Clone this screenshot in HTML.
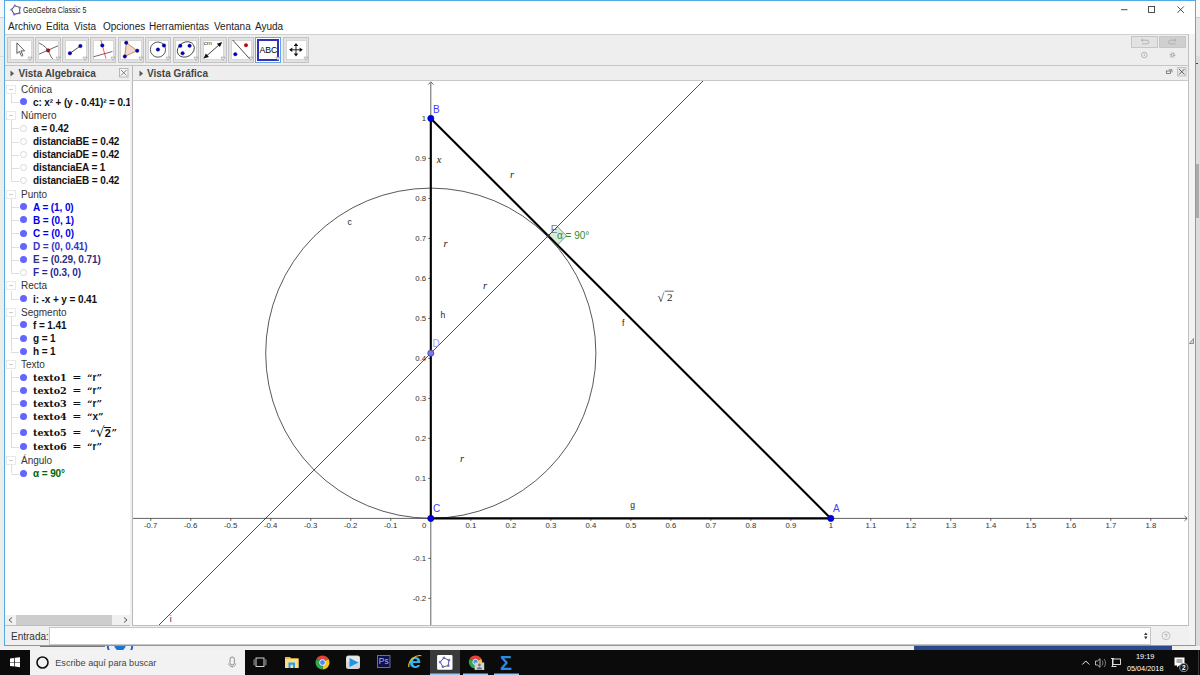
<!DOCTYPE html><html><head><meta charset="utf-8"><title>GeoGebra Classic 5</title><style>
*{box-sizing:border-box;margin:0;padding:0}
html,body{width:1200px;height:675px;overflow:hidden;background:#f0f0f0;font-family:"Liberation Sans",sans-serif;}
.abs{position:absolute}
#win{position:absolute;left:4px;top:0;width:1192px;height:646px;background:#fff;border:1px solid #55aae3;overflow:hidden}
#wi{position:absolute;left:0;top:1px;width:1190px;height:643px;background:#f0f0f0}
#title{position:absolute;left:0;top:0;width:1190px;height:18px;background:#fff}
#title .t{position:absolute;left:18px;top:4px;font-size:8.2px;color:#222;white-space:nowrap;transform:scaleX(0.86);transform-origin:0 0}
#menu{position:absolute;left:0;top:18px;width:1190px;height:14px;background:#fff;font-size:10px;color:#222;white-space:nowrap}
#menu span{position:absolute;top:1px}
#tb{position:absolute;left:0;top:32px;width:1184px;height:32px;background:#eeeeee;border-top:1px solid #d0d0d0;border-bottom:1px solid #c4c4c4}
.btn{position:absolute;top:3px;width:26px;height:26px;border:1px solid #cfcfcf;background:#e3e3e3}
.btn i{position:absolute;left:2px;top:2px;width:20px;height:20px;background:#fff;border:1px solid #dcdcdc}
.btn.sel{border:1px solid #8fb6e6;background:#fff}
.btn.sel i{left:0px;top:0px;width:24px;height:24px;border:2px solid #3a3ab8}
.btn svg{position:absolute;left:0;top:0}
.hdr{position:absolute;top:64px;height:15px;background:#eeeeee;border-bottom:1px solid #c8c8c8;font-weight:bold;font-size:10px;color:#444;white-space:nowrap}
.hdr .tx{position:absolute;top:2px}
#alg{position:absolute;left:0px;top:79px;width:125px;height:545px;background:#fff;overflow:hidden;border-bottom:1px solid #bdbdbd}
.row{position:absolute;left:0;white-space:nowrap;font-size:10px;line-height:13px;height:13px}
.cat{color:#333;left:16px}
.it{font-weight:bold;left:28px;color:#111;letter-spacing:-0.1px}
.tex{letter-spacing:0;font-family:"DejaVu Serif","Liberation Serif",serif;font-weight:bold;font-size:9.6px}
.dot{position:absolute;left:15px;width:7px;height:7px;border-radius:50%;background:#6464ff}
.dot.off{background:#fff;border:1px solid #d8d8d8}
.pm{position:absolute;left:1.400px;width:9.400px;height:9px;border:1px solid #e9e9e9;background:#fff}
.pm:after{content:"";position:absolute;left:1.500px;top:3px;width:4.600px;height:1px;background:#cccccc}
#gv{position:absolute;left:127px;top:79px;width:1057px;height:545px;background:#fff;border-left:1px solid #b8b8b8;border-right:1px solid #c0c0c0;border-bottom:1px solid #bdbdbd;overflow:hidden}
#inp{position:absolute;left:0;top:624px;width:1184px;height:20px;background:#f0f0f0}
#task{position:absolute;left:0;top:650px;width:1200px;height:25px;background:#0b0b0b}
</style></head><body>
<div class="abs" style="left:0;top:0;width:4px;height:17px;background:#f7f7f7"></div>
<div class="abs" style="left:0;top:17px;width:4px;height:629px;background:#ededed"></div>
<div class="abs" style="left:0;top:16.5px;width:4px;height:1px;background:#cfcfcf"></div>
<div class="abs" style="left:0;top:56px;width:4px;height:1px;background:#dadada"></div>
<div class="abs" style="left:1196px;top:0;width:4px;height:17px;background:#fafafa"></div>
<div class="abs" style="left:1196px;top:17px;width:4px;height:39px;background:#e6e6e6"></div>
<div class="abs" style="left:1196px;top:56px;width:4px;height:590px;background:#dcdcdc"></div>
<div class="abs" style="left:1196px;top:16.5px;width:4px;height:1px;background:#cfcfcf"></div>
<div class="abs" style="left:1196px;top:164px;width:3px;height:54px;background:#ababab"></div>
<div class="abs" style="left:1196px;top:62.5px;width:2px;height:1.5px;background:#444"></div>
<div class="abs" style="left:0;top:646px;width:1200px;height:4px;background:#f0f0f0"></div>
<div class="abs" style="left:40px;top:645.8px;width:64.5px;height:1.600px;background:#787878"></div>
<svg class="abs" style="left:103.5px;top:644px" width="32" height="6" viewBox="0 0 32 6"><circle cx="16" cy="1" r="12.300" fill="none" stroke="#1565c0" stroke-width="1.900"/><circle cx="16" cy="1" r="5.800" fill="#1976d2"/></svg>
<div class="abs" style="left:914px;top:646px;width:258px;height:4px;background:#2b4a8c"></div>
<div id="win"><div id="wi">
<div id="title">
<svg class="abs" style="left:5px;top:2px" width="12" height="12" viewBox="0 0 12 12"><polygon points="6,1.5 10.3,4.6 8.7,9.8 3.3,9.8 1.7,4.6" fill="none" stroke="#555" stroke-width="1" transform="rotate(-14 6 6)"/><g fill="#7878e0" transform="rotate(-14 6 6)"><circle cx="6" cy="1.5" r="1.2"/><circle cx="10.3" cy="4.6" r="1.2"/><circle cx="8.7" cy="9.8" r="1.2"/><circle cx="3.3" cy="9.8" r="1.2"/><circle cx="1.7" cy="4.6" r="1.2"/></g></svg>
<div class="t">GeoGebra Classic 5</div>
<svg class="abs" style="left:1110px;top:0" width="80" height="18" viewBox="0 0 80 18"><g stroke="#222" stroke-width="0.8" fill="none"><path d="M6 7.700h6.500"/><rect x="33.600" y="4.400" width="6" height="6"/><path d="M62.400 4.400l6.500 6.500M68.900 4.400l-6.500 6.500"/></g></svg>
</div>
<div id="menu">
<span style="left:3.0px">Archivo</span>
<span style="left:41.0px">Edita</span>
<span style="left:69.0px">Vista</span>
<span style="left:98.0px">Opciones</span>
<span style="left:144.0px">Herramientas</span>
<span style="left:209.0px">Ventana</span>
<span style="left:250.0px">Ayuda</span>
</div>
<div id="tb">
<div class="abs" style="left:2.30px;top:2.3px;width:26.4px;height:25.3px;background:#e2e2e2;border:1px solid #c4c4c4"></div>
<div class="abs" style="left:5.10px;top:5.100px;width:21.500px;height:19.800px;background:#fff;border:1px solid #d6d6d6"></div>
<svg class="abs" style="left:2.30px;top:2.3px" width="26.4" height="25.3" viewBox="0 0 26.4 25.3"><path d="M9.9 5.9v10.6l2.5-2.1 1.9 4.3c.4.8 1.9.2 1.5-.7l-1.9-4.1h3.7z" fill="#fff" stroke="#333" stroke-width="0.8" stroke-linejoin="miter"/><path d="M21 20.2h4l-2 3.2z" fill="#fafafa" stroke="#8c8c8c" stroke-width="0.6"/></svg>
<div class="abs" style="left:29.85px;top:2.3px;width:26.4px;height:25.3px;background:#e2e2e2;border:1px solid #c4c4c4"></div>
<div class="abs" style="left:32.65px;top:5.100px;width:21.500px;height:19.800px;background:#fff;border:1px solid #d6d6d6"></div>
<svg class="abs" style="left:29.85px;top:2.3px" width="26.4" height="25.3" viewBox="0 0 26.4 25.3"><path d="M4 5.9c5 2.4 9 6 10.5 10.500c1 2.500 2 4.500 3.400 5.600M4 17.200l19-8.400" fill="none" stroke="#333" stroke-width="0.750"/><circle cx="13.1" cy="13.4" r="1.700" fill="#d40000" stroke="#500" stroke-width="0.500"/><path d="M21 20.2h4l-2 3.2z" fill="#fafafa" stroke="#8c8c8c" stroke-width="0.6"/></svg>
<div class="abs" style="left:57.40px;top:2.3px;width:26.4px;height:25.3px;background:#e2e2e2;border:1px solid #c4c4c4"></div>
<div class="abs" style="left:60.20px;top:5.100px;width:21.500px;height:19.800px;background:#fff;border:1px solid #d6d6d6"></div>
<svg class="abs" style="left:57.40px;top:2.3px" width="26.4" height="25.3" viewBox="0 0 26.4 25.3"><path d="M7.9 16.3L18.4 9" stroke="#222" stroke-width="0.8"/><circle cx="7.9" cy="16.3" r="1.75" fill="#0000c8" stroke="#00004a" stroke-width="0.4"/><circle cx="18.4" cy="9" r="1.75" fill="#0000c8" stroke="#00004a" stroke-width="0.4"/><path d="M21 20.2h4l-2 3.2z" fill="#fafafa" stroke="#8c8c8c" stroke-width="0.6"/></svg>
<div class="abs" style="left:84.95px;top:2.3px;width:26.4px;height:25.3px;background:#e2e2e2;border:1px solid #c4c4c4"></div>
<div class="abs" style="left:87.75px;top:5.100px;width:21.500px;height:19.800px;background:#fff;border:1px solid #d6d6d6"></div>
<svg class="abs" style="left:84.95px;top:2.3px" width="26.4" height="25.3" viewBox="0 0 26.4 25.3"><path d="M10.85 3.15L16 21.6" stroke="#ff3030" stroke-width="0.8"/><path d="M3.5 19.8l18.900-5.300" stroke="#5a3c3c" stroke-width="0.8"/><circle cx="12.3" cy="8.4" r="1.75" fill="#0000c8" stroke="#00004a" stroke-width="0.4"/><path d="M21 20.2h4l-2 3.2z" fill="#fafafa" stroke="#8c8c8c" stroke-width="0.6"/></svg>
<div class="abs" style="left:112.50px;top:2.3px;width:26.4px;height:25.3px;background:#e2e2e2;border:1px solid #c4c4c4"></div>
<div class="abs" style="left:115.30px;top:5.100px;width:21.500px;height:19.800px;background:#fff;border:1px solid #d6d6d6"></div>
<svg class="abs" style="left:112.50px;top:2.3px" width="26.4" height="25.3" viewBox="0 0 26.4 25.3"><polygon points="8.26,5.7 19.25,13.7 6.8,19.4" fill="#f2d6c8" stroke="#b87850" stroke-width="0.8"/><circle cx="8.26" cy="5.7" r="1.75" fill="#0000c8" stroke="#00004a" stroke-width="0.4"/><circle cx="19.25" cy="13.7" r="1.75" fill="#0000c8" stroke="#00004a" stroke-width="0.4"/><circle cx="6.8" cy="19.4" r="1.75" fill="#0000c8" stroke="#00004a" stroke-width="0.4"/><path d="M21 20.2h4l-2 3.2z" fill="#fafafa" stroke="#8c8c8c" stroke-width="0.6"/></svg>
<div class="abs" style="left:140.05px;top:2.3px;width:26.4px;height:25.3px;background:#e2e2e2;border:1px solid #c4c4c4"></div>
<div class="abs" style="left:142.85px;top:5.100px;width:21.500px;height:19.800px;background:#fff;border:1px solid #d6d6d6"></div>
<svg class="abs" style="left:140.05px;top:2.3px" width="26.4" height="25.3" viewBox="0 0 26.4 25.3"><circle cx="12.95" cy="12.6" r="7.6" fill="none" stroke="#222" stroke-width="0.75"/><circle cx="12.95" cy="12.6" r="1.75" fill="#0000c8" stroke="#00004a" stroke-width="0.4"/><circle cx="18.95" cy="8.4" r="1.75" fill="#0000c8" stroke="#00004a" stroke-width="0.4"/><path d="M21 20.2h4l-2 3.2z" fill="#fafafa" stroke="#8c8c8c" stroke-width="0.6"/></svg>
<div class="abs" style="left:167.60px;top:2.3px;width:26.4px;height:25.3px;background:#e2e2e2;border:1px solid #c4c4c4"></div>
<div class="abs" style="left:170.40px;top:5.100px;width:21.500px;height:19.800px;background:#fff;border:1px solid #d6d6d6"></div>
<svg class="abs" style="left:167.60px;top:2.3px" width="26.4" height="25.3" viewBox="0 0 26.4 25.3"><ellipse cx="12.8" cy="12.45" rx="9" ry="7.2" fill="none" stroke="#222" stroke-width="0.75" transform="rotate(-32 12.8 12.45)"/><circle cx="7.3" cy="8.8" r="1.75" fill="#0000c8" stroke="#00004a" stroke-width="0.4"/><circle cx="16.6" cy="8.8" r="1.75" fill="#0000c8" stroke="#00004a" stroke-width="0.4"/><circle cx="9.6" cy="16.35" r="1.75" fill="#0000c8" stroke="#00004a" stroke-width="0.4"/><path d="M21 20.2h4l-2 3.2z" fill="#fafafa" stroke="#8c8c8c" stroke-width="0.6"/></svg>
<div class="abs" style="left:195.15px;top:2.3px;width:26.4px;height:25.3px;background:#e2e2e2;border:1px solid #c4c4c4"></div>
<div class="abs" style="left:197.95px;top:5.100px;width:21.500px;height:19.800px;background:#fff;border:1px solid #d6d6d6"></div>
<svg class="abs" style="left:195.15px;top:2.3px" width="26.4" height="25.3" viewBox="0 0 26.4 25.3"><path d="M5 20.3L20.800 6.400" stroke="#111" stroke-width="0.800"/><path d="M3.550 21.600l2.300-5 3.100 3.400zM22.250 5.100l-2.300 5-3.100-3.400z" fill="#111"/><text x="3.700" y="8.500" font-size="6.200" fill="#333" font-family="Liberation Sans, sans-serif">cm</text><path d="M21 20.2h4l-2 3.2z" fill="#fafafa" stroke="#8c8c8c" stroke-width="0.6"/></svg>
<div class="abs" style="left:222.70px;top:2.3px;width:26.4px;height:25.3px;background:#e2e2e2;border:1px solid #c4c4c4"></div>
<div class="abs" style="left:225.50px;top:5.100px;width:21.500px;height:19.800px;background:#fff;border:1px solid #d6d6d6"></div>
<svg class="abs" style="left:222.70px;top:2.3px" width="26.4" height="25.3" viewBox="0 0 26.4 25.3"><path d="M4.6 2.9L21.8 22" stroke="#222" stroke-width="0.8"/><circle cx="18" cy="8.2" r="1.700" fill="#e00000" stroke="#600" stroke-width="0.400"/><circle cx="7.3" cy="17.2" r="1.75" fill="#0000c8" stroke="#00004a" stroke-width="0.4"/><path d="M21 20.2h4l-2 3.2z" fill="#fafafa" stroke="#8c8c8c" stroke-width="0.6"/></svg>
<div class="abs" style="left:250.05px;top:1.9px;width:25.8px;height:25.8px;background:#fff;border:1px solid #6aa2dc"></div>
<div class="abs" style="left:252.05px;top:4px;width:22.100px;height:21.500px;background:#fff;border:2px solid #3030b8"></div>
<svg class="abs" style="left:250.25px;top:2.3px" width="26.4" height="25.3" viewBox="0 0 26.4 25.3"><text x="4.5" y="16.100" font-size="8.700" fill="#000" font-family="Liberation Sans, sans-serif">ABC</text><path d="M21 20.2h4l-2 3.2z" fill="#fafafa" stroke="#8c8c8c" stroke-width="0.6"/></svg>
<div class="abs" style="left:277.80px;top:2.3px;width:26.4px;height:25.3px;background:#e2e2e2;border:1px solid #c4c4c4"></div>
<div class="abs" style="left:280.60px;top:5.100px;width:21.500px;height:19.800px;background:#fff;border:1px solid #d6d6d6"></div>
<svg class="abs" style="left:277.80px;top:2.3px" width="26.4" height="25.3" viewBox="0 0 26.4 25.3"><path d="M8 12.800h10M13 7.800v10" stroke="#111" stroke-width="0.900"/><path d="M6.100 12.800l3.200-2.300v4.600zM19.800 12.800l-3.200-2.300v4.600zM13 5.900l-2.300 3.100h4.600zM13 19.600l-2.300-3.100h4.600z" fill="#111"/><path d="M21 20.2h4l-2 3.2z" fill="#fafafa" stroke="#8c8c8c" stroke-width="0.6"/></svg>
<div class="abs" style="left:1126px;top:0.5px;width:27px;height:12px;background:#e2e2e2;border:1px solid #c6c6c6"></div>
<div class="abs" style="left:1154px;top:0.5px;width:27px;height:12px;background:#cfcfcf;border:1px solid #c6c6c6"></div>
<svg class="abs" style="left:1126px;top:1.2px" width="56" height="28" viewBox="0 0 56 28"><g fill="none" stroke="#a8a8a8" stroke-width="0.8"><g transform="translate(0 -0.800)"><path d="M10.5 5h5.5a1.7 1.7 0 010 3.6h-5"/><path d="M12 3.5l-1.8 1.5 1.8 1.5"/><path d="M45 5h-5.5a1.7 1.7 0 000 3.6h5"/><path d="M43.5 3.5l1.8 1.5-1.8 1.5"/></g><circle cx="13.3" cy="19" r="2.8"/><path d="M13.3 17.5v2.5"/><circle cx="41.5" cy="19" r="2.2" stroke-width="1.3" stroke-dasharray="1.1 0.9"/><circle cx="41.5" cy="19" r="1.2"/></g></svg>
</div>
<div class="hdr" style="left:0;width:126px"><svg class="abs" style="left:5px;top:4px" width="5" height="7"><path d="M0.5 0.5l3.5 3-3.5 3z" fill="#555"/></svg><span class="tx" style="left:13.5px">Vista Algebraica</span>
<svg class="abs" style="left:114px;top:2px" width="10" height="10" viewBox="0 0 10 10"><rect x="0.5" y="0.5" width="8.5" height="8.5" fill="#f4f4f4" stroke="#aaa" stroke-width="0.8"/><path d="M2 2l5.5 5.5M7.5 2L2 7.5" stroke="#666" stroke-width="0.8"/></svg></div>
<div class="abs" style="left:125px;top:64px;width:2px;height:560px;background:#f0f0f0"></div>
<div class="hdr" style="left:127px;width:1057px;border-left:1px solid #b8b8b8"><svg class="abs" style="left:6px;top:4px" width="5" height="7"><path d="M0.5 0.5l3.5 3-3.5 3z" fill="#555"/></svg><span class="tx" style="left:14px">Vista Gráfica</span>
<svg class="abs" style="left:1028.200px;top:0px" width="26" height="13" viewBox="0 0 26 13"><g fill="none" stroke="#555" stroke-width="0.7"><rect x="5.5" y="5" width="4" height="2.6"/><path d="M7.8 3.8h3.2v2.6"/></g><rect x="16.5" y="1.5" width="8.5" height="8.5" fill="#e4e4e4" stroke="#bbb" stroke-width="0.8"/><path d="M18 3l5.5 5.5M23.5 3L18 8.5" stroke="#444" stroke-width="0.8"/></svg></div>
<div id="alg">
<div class="abs" style="left:6.300px;top:13.0px;width:1px;height:8.1px;background:#dedede"></div>
<div class="abs" style="left:6.300px;top:21.1px;width:7.400px;height:1px;background:#dedede"></div>
<div class="abs" style="left:6.300px;top:39.2px;width:1px;height:60.6px;background:#dedede"></div>
<div class="abs" style="left:6.300px;top:47.4px;width:7.400px;height:1px;background:#dedede"></div>
<div class="abs" style="left:6.300px;top:60.5px;width:7.400px;height:1px;background:#dedede"></div>
<div class="abs" style="left:6.300px;top:73.6px;width:7.400px;height:1px;background:#dedede"></div>
<div class="abs" style="left:6.300px;top:86.8px;width:7.400px;height:1px;background:#dedede"></div>
<div class="abs" style="left:6.300px;top:99.9px;width:7.400px;height:1px;background:#dedede"></div>
<div class="abs" style="left:6.300px;top:118.0px;width:1px;height:73.8px;background:#dedede"></div>
<div class="abs" style="left:6.300px;top:126.1px;width:7.400px;height:1px;background:#dedede"></div>
<div class="abs" style="left:6.300px;top:139.2px;width:7.400px;height:1px;background:#dedede"></div>
<div class="abs" style="left:6.300px;top:152.4px;width:7.400px;height:1px;background:#dedede"></div>
<div class="abs" style="left:6.300px;top:165.5px;width:7.400px;height:1px;background:#dedede"></div>
<div class="abs" style="left:6.300px;top:178.6px;width:7.400px;height:1px;background:#dedede"></div>
<div class="abs" style="left:6.300px;top:191.8px;width:7.400px;height:1px;background:#dedede"></div>
<div class="abs" style="left:6.300px;top:209.9px;width:1px;height:8.1px;background:#dedede"></div>
<div class="abs" style="left:6.300px;top:218.0px;width:7.400px;height:1px;background:#dedede"></div>
<div class="abs" style="left:6.300px;top:236.1px;width:1px;height:34.4px;background:#dedede"></div>
<div class="abs" style="left:6.300px;top:244.2px;width:7.400px;height:1px;background:#dedede"></div>
<div class="abs" style="left:6.300px;top:257.4px;width:7.400px;height:1px;background:#dedede"></div>
<div class="abs" style="left:6.300px;top:270.5px;width:7.400px;height:1px;background:#dedede"></div>
<div class="abs" style="left:6.300px;top:288.6px;width:1px;height:77.1px;background:#dedede"></div>
<div class="abs" style="left:6.300px;top:296.4px;width:7.400px;height:1px;background:#dedede"></div>
<div class="abs" style="left:6.300px;top:309.5px;width:7.400px;height:1px;background:#dedede"></div>
<div class="abs" style="left:6.300px;top:322.6px;width:7.400px;height:1px;background:#dedede"></div>
<div class="abs" style="left:6.300px;top:335.7px;width:7.400px;height:1px;background:#dedede"></div>
<div class="abs" style="left:6.300px;top:351.8px;width:7.400px;height:1px;background:#dedede"></div>
<div class="abs" style="left:6.300px;top:365.7px;width:7.400px;height:1px;background:#dedede"></div>
<div class="abs" style="left:6.300px;top:384.4px;width:1px;height:8.1px;background:#dedede"></div>
<div class="abs" style="left:6.300px;top:392.5px;width:7.400px;height:1px;background:#dedede"></div>
<div class="pm" style="top:3.5px"></div>
<div class="row cat" style="top:1.5px">Cónica</div>
<div class="dot " style="top:17.3px"></div>
<div class="row it" style="top:14.6px;color:#111"><span style="letter-spacing:-0.13px">c: x² + (y - 0.41)² = 0.1</span></div>
<div class="pm" style="top:29.8px"></div>
<div class="row cat" style="top:27.8px">Número</div>
<div class="dot off" style="top:43.6px"></div>
<div class="row it" style="top:40.9px;color:#111">a = 0.42</div>
<div class="dot off" style="top:56.7px"></div>
<div class="row it" style="top:54.0px;color:#111">distanciaBE = 0.42</div>
<div class="dot off" style="top:69.8px"></div>
<div class="row it" style="top:67.1px;color:#111">distanciaDE = 0.42</div>
<div class="dot off" style="top:83.0px"></div>
<div class="row it" style="top:80.2px;color:#111">distanciaEA = 1</div>
<div class="dot off" style="top:96.1px"></div>
<div class="row it" style="top:93.4px;color:#111">distanciaEB = 0.42</div>
<div class="pm" style="top:108.5px"></div>
<div class="row cat" style="top:106.5px">Punto</div>
<div class="dot " style="top:122.3px"></div>
<div class="row it" style="top:119.6px;color:#0000ee">A = (1, 0)</div>
<div class="dot " style="top:135.4px"></div>
<div class="row it" style="top:132.8px;color:#0000ee">B = (0, 1)</div>
<div class="dot " style="top:148.6px"></div>
<div class="row it" style="top:145.9px;color:#0000ee">C = (0, 0)</div>
<div class="dot " style="top:161.7px"></div>
<div class="row it" style="top:159.0px;color:#3535c8">D = (0, 0.41)</div>
<div class="dot " style="top:174.8px"></div>
<div class="row it" style="top:172.1px;color:#303080">E = (0.29, 0.71)</div>
<div class="dot off" style="top:187.9px"></div>
<div class="row it" style="top:185.2px;color:#2a2a9c">F = (0.3, 0)</div>
<div class="pm" style="top:200.4px"></div>
<div class="row cat" style="top:198.4px">Recta</div>
<div class="dot " style="top:214.2px"></div>
<div class="row it" style="top:211.5px;color:#111">i: -x + y = 0.41</div>
<div class="pm" style="top:226.6px"></div>
<div class="row cat" style="top:224.6px">Segmento</div>
<div class="dot " style="top:240.4px"></div>
<div class="row it" style="top:237.8px;color:#111">f = 1.41</div>
<div class="dot " style="top:253.6px"></div>
<div class="row it" style="top:250.9px;color:#111">g = 1</div>
<div class="dot " style="top:266.7px"></div>
<div class="row it" style="top:264.0px;color:#111">h = 1</div>
<div class="pm" style="top:279.1px"></div>
<div class="row cat" style="top:277.1px">Texto</div>
<div class="dot " style="top:292.6px"></div>
<div class="row it tex" style="top:289.9px">texto1<span style="margin:0 5.5px 0 5.5px;font-weight:normal;font-size:11px">=</span>“<span style="font-family:Liberation Sans,sans-serif;font-size:10px">r</span>”</div>
<div class="dot " style="top:305.7px"></div>
<div class="row it tex" style="top:303.0px">texto2<span style="margin:0 5.5px 0 5.5px;font-weight:normal;font-size:11px">=</span>“<span style="font-family:Liberation Sans,sans-serif;font-size:10px">r</span>”</div>
<div class="dot " style="top:318.8px"></div>
<div class="row it tex" style="top:316.1px">texto3<span style="margin:0 5.5px 0 5.5px;font-weight:normal;font-size:11px">=</span>“<span style="font-family:Liberation Sans,sans-serif;font-size:10px">r</span>”</div>
<div class="dot " style="top:331.9px"></div>
<div class="row it tex" style="top:329.2px">texto4<span style="margin:0 5.5px 0 5.5px;font-weight:normal;font-size:11px">=</span>“<span style="font-family:Liberation Sans,sans-serif;font-size:10px">x</span>”</div>
<div class="dot " style="top:348.0px"></div>
<div class="row it tex" style="top:344.8px">texto5<span style="margin:0 5.5px 0 5.5px;font-weight:normal;font-size:11px">=</span>&nbsp;“<span style="font-size:14px;font-weight:normal;position:relative;top:1.500px;line-height:10px">√</span><span style="font-family:Liberation Sans,sans-serif;font-size:11px;border-top:1px solid #111;display:inline-block;line-height:10.5px;padding:0 0.5px;position:relative;top:1px;margin-left:-0.5px">2</span>”</div>
<div class="dot " style="top:361.9px"></div>
<div class="row it tex" style="top:359.2px">texto6<span style="margin:0 5.5px 0 5.5px;font-weight:normal;font-size:11px">=</span>“<span style="font-family:Liberation Sans,sans-serif;font-size:10px">r</span>”</div>
<div class="pm" style="top:374.9px"></div>
<div class="row cat" style="top:372.9px">Ángulo</div>
<div class="dot " style="top:388.7px"></div>
<div class="row it" style="top:386.0px;color:#006400">α = 90°</div>
<div class="abs" style="left:0;top:534px;width:126px;height:10px;background:#f0f0f0"></div>
<div class="abs" style="left:11px;top:534px;width:96px;height:10px;background:#cdcdcd"></div>
<svg class="abs" style="left:0;top:534px" width="126" height="10" viewBox="0 0 126 10"><path d="M7 2.5l-3 2.5 3 2.5M119 2.5l3 2.5-3 2.5" fill="none" stroke="#555" stroke-width="1"/></svg>
</div>
<div id="gv">
<svg class="abs" style="left:-133px;top:-81px" width="1200" height="675" viewBox="0 0 1200 675" font-family="Liberation Sans, sans-serif"><g stroke="#3a3a3a" stroke-width="0.8" fill="none"><path d="M133 518.4H1187"/><path d="M430.8 625V83"/><path d="M1184.5 515.9l2.7 2.5-2.7 2.5"/><path d="M428.3 84.500l2.500-2.700 2.500 2.700"/><path d="M150.8 518.4v2.5"/><path d="M190.8 518.4v2.5"/><path d="M230.8 518.4v2.5"/><path d="M270.8 518.4v2.5"/><path d="M310.8 518.4v2.5"/><path d="M350.8 518.4v2.5"/><path d="M390.8 518.4v2.5"/><path d="M470.8 518.4v2.5"/><path d="M510.8 518.4v2.5"/><path d="M550.8 518.4v2.5"/><path d="M590.8 518.4v2.5"/><path d="M630.8 518.4v2.5"/><path d="M670.8 518.4v2.5"/><path d="M710.8 518.4v2.5"/><path d="M750.8 518.4v2.5"/><path d="M790.8 518.4v2.5"/><path d="M830.8 518.4v2.5"/><path d="M870.8 518.4v2.5"/><path d="M910.8 518.4v2.5"/><path d="M950.8 518.4v2.5"/><path d="M990.8 518.4v2.5"/><path d="M1030.8 518.4v2.5"/><path d="M1070.8 518.4v2.5"/><path d="M1110.8 518.4v2.5"/><path d="M1150.8 518.4v2.5"/><path d="M430.8 598.4h-2.5"/><path d="M430.8 558.4h-2.5"/><path d="M430.8 478.4h-2.5"/><path d="M430.8 438.4h-2.5"/><path d="M430.8 398.4h-2.5"/><path d="M430.8 358.4h-2.5"/><path d="M430.8 318.4h-2.5"/><path d="M430.8 278.4h-2.5"/><path d="M430.8 238.4h-2.5"/><path d="M430.8 198.4h-2.5"/><path d="M430.8 158.4h-2.5"/><path d="M430.8 118.4h-2.5"/></g><g font-size="7.8" fill="#333"><text x="150.6" y="528.1" text-anchor="middle">-0.7</text><text x="190.6" y="528.1" text-anchor="middle">-0.6</text><text x="230.6" y="528.1" text-anchor="middle">-0.5</text><text x="270.6" y="528.1" text-anchor="middle">-0.4</text><text x="310.6" y="528.1" text-anchor="middle">-0.3</text><text x="350.6" y="528.1" text-anchor="middle">-0.2</text><text x="390.6" y="528.1" text-anchor="middle">-0.1</text><text x="470.8" y="528.1" text-anchor="middle">0.1</text><text x="510.8" y="528.1" text-anchor="middle">0.2</text><text x="550.8" y="528.1" text-anchor="middle">0.3</text><text x="590.8" y="528.1" text-anchor="middle">0.4</text><text x="630.8" y="528.1" text-anchor="middle">0.5</text><text x="670.8" y="528.1" text-anchor="middle">0.6</text><text x="710.8" y="528.1" text-anchor="middle">0.7</text><text x="750.8" y="528.1" text-anchor="middle">0.8</text><text x="790.8" y="528.1" text-anchor="middle">0.9</text><text x="830.8" y="528.1" text-anchor="middle">1</text><text x="870.8" y="528.1" text-anchor="middle">1.1</text><text x="910.8" y="528.1" text-anchor="middle">1.2</text><text x="950.8" y="528.1" text-anchor="middle">1.3</text><text x="990.8" y="528.1" text-anchor="middle">1.4</text><text x="1030.8" y="528.1" text-anchor="middle">1.5</text><text x="1070.8" y="528.1" text-anchor="middle">1.6</text><text x="1110.8" y="528.1" text-anchor="middle">1.7</text><text x="1150.8" y="528.1" text-anchor="middle">1.8</text><text x="426.3" y="528.1" text-anchor="end">0</text><text x="426.2" y="601.2" text-anchor="end">-0.2</text><text x="426.2" y="561.2" text-anchor="end">-0.1</text><text x="426.2" y="481.2" text-anchor="end">0.1</text><text x="426.2" y="441.2" text-anchor="end">0.2</text><text x="426.2" y="401.2" text-anchor="end">0.3</text><text x="426.2" y="361.2" text-anchor="end">0.4</text><text x="426.2" y="321.2" text-anchor="end">0.5</text><text x="426.2" y="281.2" text-anchor="end">0.6</text><text x="426.2" y="241.2" text-anchor="end">0.7</text><text x="426.2" y="201.2" text-anchor="end">0.8</text><text x="426.2" y="161.2" text-anchor="end">0.9</text><text x="426.2" y="121.2" text-anchor="end">1</text></g><circle cx="430.8" cy="353.2" r="165.1" fill="none" stroke="#222" stroke-width="0.75"/><polygon points="548.2,235.8 557.4,226.6 566.6,235.8 557.4,245.0" fill="#dcecdc" stroke="#2e8b2e" stroke-width="0.7"/><path d="M158.0 626L704.0 80" stroke="#222" stroke-width="0.8"/><g stroke="#000" stroke-width="2.1" stroke-linecap="round"><path d="M430.8 118.4L830.8 518.4"/><path d="M430.8 518.4L830.8 518.4"/><path d="M430.8 518.4L430.8 118.4"/></g><circle cx="430.8" cy="118.4" r="3.1" fill="#0000ee" stroke="#000060" stroke-width="0.6"/><circle cx="430.8" cy="518.4" r="3.1" fill="#0000ee" stroke="#000060" stroke-width="0.6"/><circle cx="830.8" cy="518.4" r="3.1" fill="#0000ee" stroke="#000060" stroke-width="0.6"/><circle cx="430.8" cy="353.2" r="3.1" fill="#7777ee" stroke="#303070" stroke-width="0.6"/><rect x="546.7" y="234.3" width="3" height="3" fill="#333"/><g font-size="10"><text x="433" y="112.600" fill="#3c3cff">B</text><text x="433" y="511.5" fill="#3c3cff">C</text><text x="833" y="511.5" fill="#3c3cff">A</text><text x="432.5" y="347" fill="#9a9aff">D</text><text x="550.7" y="233.2" fill="#777">E</text><text x="557" y="239.3" fill="#2e8b2e" font-size="10">α = 90°</text></g><g font-size="8.6" fill="#222"><text x="347.5" y="225">c</text><text x="622" y="325.5">f</text><text x="630.2" y="507.6">g</text><text x="440.5" y="317.5">h</text><text x="169.8" y="621.5">i</text></g><g font-family="Liberation Serif, serif" font-style="italic" font-size="10.5" fill="#222"><text x="510" y="178">r</text><text x="443.5" y="246.5">r</text><text x="483" y="288.5">r</text><text x="460" y="462">r</text><text x="436.8" y="162.5">x</text></g><g font-family="Liberation Serif, serif" fill="#222"><text x="657.5" y="301.5" font-size="12">√</text><text x="667" y="301.3" font-size="11">2</text><path d="M664.6 291.2h9.2" stroke="#222" stroke-width="0.7"/></g></svg>
</div>
<div class="abs" style="left:1183px;top:32px;width:7px;height:612px;background:#f3f3f3;border-left:1px solid #c0c0c0"></div>
<svg class="abs" style="left:1183px;top:333px" width="8" height="10"><path d="M1.5 8.5l4-5v5z" fill="#ddd" stroke="#666" stroke-width="0.7"/></svg>
<div id="inp"><span class="abs" style="left:6px;top:4.5px;font-size:10px;color:#333">Entrada:</span><div class="abs" style="left:44px;top:1px;width:1102px;height:17.5px;background:#fff;border:1px solid #c6c6c6"></div>
<svg class="abs" style="left:1136px;top:4px" width="40" height="12" viewBox="0 0 40 12"><path d="M3 5l1.8-2.6 1.8 2.6zM3 6.6l1.8 2.6 1.8-2.6z" fill="#333"/><circle cx="25" cy="5.700" r="4" fill="none" stroke="#aaa" stroke-width="0.700"/><text x="25" y="7.800" font-size="6" text-anchor="middle" fill="#999" font-family="Liberation Sans, sans-serif">?</text></svg>
</div>
</div></div>
<div id="task">
<svg class="abs" style="left:10px;top:7.300px" width="10.200" height="10.400" viewBox="0 0 11 11"><path d="M0 1.6l4.6-.7v4.3H0zM5.3.8L11 0v5.2H5.3zM0 5.9h4.6v4.3L0 9.5zM5.3 5.9H11V11l-5.7-.8z" fill="#fff"/></svg>
<div class="abs" style="left:30px;top:0;width:215px;height:25px;background:#f2f2f2"></div>
<svg class="abs" style="left:35.600px;top:6.400px" width="13" height="13"><circle cx="6.500" cy="6.500" r="5.500" fill="none" stroke="#111" stroke-width="1.600"/></svg>
<div class="abs" style="left:55.3px;top:7.8px;font-size:9.1px;color:#444;white-space:nowrap">Escribe aquí para buscar</div>
<svg class="abs" style="left:227px;top:5px" width="10" height="15" viewBox="0 0 10 15"><rect x="3" y="2" width="4.400" height="8" rx="2.200" fill="none" stroke="#808080" stroke-width="0.900"/><path d="M1.600 8.500c0 4 7.200 4 7.200 0M5.200 11.500v1.200" fill="none" stroke="#8a8a8a" stroke-width="0.800"/></svg>
<svg class="abs" style="left:245px;top:0" width="300" height="25" viewBox="0 0 300 25">
<g fill="none"><rect x="11" y="8" width="8" height="8.500" stroke="#e6e6e6" stroke-width="0.900"/><path d="M9.100 9.300v6M20.900 9.300v6" stroke="#a0a0a0" stroke-width="1"/></g>
<path d="M40 7h5l1 1.300h7.500v9.700H40z" fill="#e9b93a"/><rect x="40" y="8.800" width="13.500" height="9.200" fill="#f8dd8e"/><path d="M43.500 18v-5.500h6.500V18h-2v-3.300h-2.500V18z" fill="#2a9af0"/>
<path d="M77.50 12.50L71.44 9.00A7.00 7.00 0 0 1 83.56 9.00z" fill="#e0443a"/><path d="M77.50 12.50L83.56 9.00A7.00 7.00 0 0 1 77.50 19.50z" fill="#f7c61c"/><path d="M77.50 12.50L77.50 19.50A7.00 7.00 0 0 1 71.44 9.00z" fill="#2fa84f"/><circle cx="77.50" cy="12.50" r="2.90" fill="#4a8af4" stroke="#fff" stroke-width="0.87"/>
<rect x="101" y="5.500" width="14" height="13.500" rx="2.500" fill="#d4d6da"/><rect x="101.800" y="6.300" width="12.400" height="6" rx="2" fill="#e8eaec"/><path d="M104.500 8l9 4.500-9 4.500z" fill="#1a98e6"/>
<rect x="132.400" y="5.600" width="12.600" height="11.900" fill="#10104c" stroke="#6c8cdc" stroke-width="0.800"/><text x="138.700" y="14.300" font-size="8.400" fill="#9cbcff" text-anchor="middle" font-family="Liberation Sans, sans-serif">Ps</text>
<text x="170" y="18.300" font-size="21" fill="#3ab4f0" text-anchor="middle" font-family="Liberation Sans, sans-serif" font-weight="bold">e</text><path d="M176.300 5.800c-5-1.500-14 5-12.300 11.400" fill="none" stroke="#f0c020" stroke-width="1.200"/>
<rect x="185" y="0" width="30" height="25" fill="#3a3a3c"/><rect x="185" y="23.500" width="30" height="1.500" fill="#9ccaf0"/><rect x="192.100" y="4.900" width="15.400" height="14.800" rx="1" fill="#fff"/><g transform="translate(-4.700 -0.200) rotate(-12 204.500 12.500)"><polygon points="204.500,8 209,11.300 207.300,16.500 201.700,16.500 200,11.300" fill="none" stroke="#555" stroke-width="0.900"/><g fill="#6a6ae0"><circle cx="204.500" cy="8" r="1.300"/><circle cx="209" cy="11.300" r="1.300"/><circle cx="207.300" cy="16.500" r="1.300"/><circle cx="201.700" cy="16.500" r="1.300"/><circle cx="200" cy="11.300" r="1.300"/></g></g>
<rect x="218" y="23.500" width="25" height="1.500" fill="#9ccaf0"/><path d="M230.50 12.00L224.78 8.70A6.60 6.60 0 0 1 236.22 8.70z" fill="#e0443a"/><path d="M230.50 12.00L236.22 8.70A6.60 6.60 0 0 1 230.50 18.60z" fill="#f7c61c"/><path d="M230.50 12.00L230.50 18.60A6.60 6.60 0 0 1 224.78 8.70z" fill="#2fa84f"/><circle cx="230.50" cy="12.00" r="2.70" fill="#4a8af4" stroke="#fff" stroke-width="0.81"/><rect x="229.700" y="12.500" width="9.500" height="7.500" fill="#d4d4d4"/><circle cx="234.400" cy="15" r="1.400" fill="#777"/><path d="M231.600 19.600c0-3.400 5.600-3.400 5.600 0z" fill="#777"/>
<rect x="249" y="23.500" width="25" height="1.500" fill="#9ccaf0"/><text x="261" y="19.900" font-size="20" fill="#2a8ae6" text-anchor="middle" font-family="Liberation Sans, sans-serif" font-weight="bold">Σ</text>
</svg>
<svg class="abs" style="left:1075px;top:0" width="125" height="25" viewBox="0 0 125 25">
<path d="M7.300 14.500l3.500-3.500 3.500 3.500" fill="none" stroke="#eee" stroke-width="1"/>
<path d="M20.500 11h2l2.500-2.300v8.600l-2.500-2.300h-2z" fill="none" stroke="#ddd" stroke-width="0.800"/><path d="M27 10.500c1.200 1.500 1.200 3.500 0 5M29 9c2 2.500 2 5.500 0 8" fill="none" stroke="#aaa" stroke-width="0.700"/>
<g fill="none" stroke="#eee" stroke-width="0.900"><rect x="38" y="9" width="7.500" height="5.500"/><path d="M36 8.500h3M37.500 8.500v8M36.500 16.500h5"/></g>
<text x="70.200" y="9.300" font-size="7.300" fill="#fff" text-anchor="middle" font-family="Liberation Sans, sans-serif">19:19</text><text x="70.200" y="20.700" font-size="7.300" fill="#fff" text-anchor="middle" font-family="Liberation Sans, sans-serif">05/04/2018</text>
<path d="M99.500 7.500h10v8h-5.500l-2 2v-2h-2.500z" fill="#fff"/><path d="M101.500 10h6M101.500 12h6" stroke="#111" stroke-width="0.700"/><circle cx="108.800" cy="17.500" r="4.100" fill="#1c1c1c" stroke="#9a9a9a" stroke-width="0.900"/><text x="108.800" y="19.800" font-size="6.400" fill="#fff" text-anchor="middle" font-family="Liberation Sans, sans-serif" font-weight="bold">2</text>
<path d="M123.500 0v25" stroke="#555" stroke-width="0.600"/>
</svg>
</div>
</body></html>
